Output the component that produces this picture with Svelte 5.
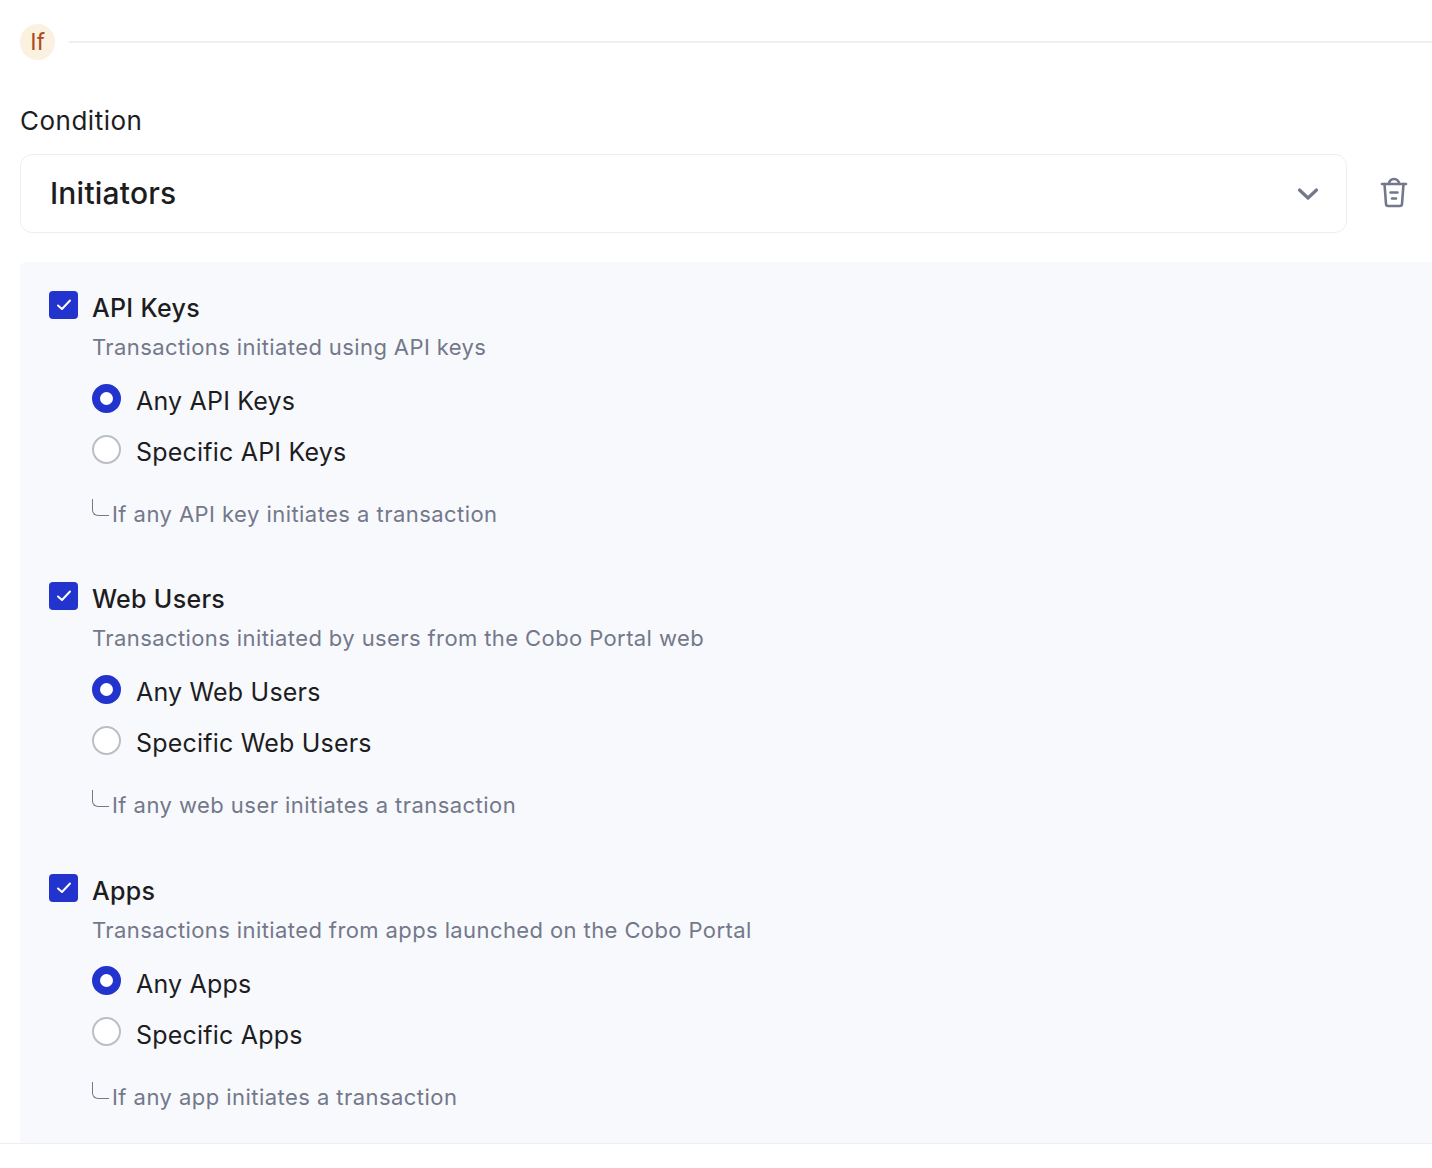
<script lang="ts">
    const groups = [
        {
            title: 'API Keys',
            desc: 'Transactions initiated using API keys',
            any: 'Any API Keys',
            specific: 'Specific API Keys',
            note: 'If any API key initiates a transaction'
        },
        {
            title: 'Web Users',
            desc: 'Transactions initiated by users from the Cobo Portal web',
            any: 'Any Web Users',
            specific: 'Specific Web Users',
            note: 'If any web user initiates a transaction'
        },
        {
            title: 'Apps',
            desc: 'Transactions initiated from apps launched on the Cobo Portal',
            any: 'Any Apps',
            specific: 'Specific Apps',
            note: 'If any app initiates a transaction'
        }
    ];
</script>

<div class="page">
    <div class="step">
        <span class="badge">If</span>
        <span class="rule"></span>
    </div>

    <div class="label">Condition</div>
    <div class="row">
        <div class="select">
            <span class="value">Initiators</span>
            <svg width="22" height="14" viewBox="0 0 22 14" fill="none">
                <path d="M2.5 3 11 11l8.500-8" stroke="#73788a" stroke-width="3.200" stroke-linecap="round" stroke-linejoin="round" />
            </svg>
        </div>
        <svg class="trash" width="28" height="32" viewBox="0 0 28 32" fill="none" stroke="#73788a" stroke-width="2.600" stroke-linecap="round" stroke-linejoin="round">
            <path d="M2 7h24" />
            <path d="M9 7c0-3 2-5 5-5s5 2 5 5" />
            <path d="M4.500 7l1.500 20c.1 1.300 1 2 2.200 2h11.600c1.200 0 2.100-.7 2.200-2l1.500-20" />
            <path d="M10.500 15.500h7M12 21.500h4" />
        </svg>
    </div>

    <div class="panel">
        {#each groups as g}
            <section class="group">
                <div class="head">
                    <span class="check">
                        <svg width="16" height="14" viewBox="0 0 16 14" fill="none">
                            <path d="M2 7.500 6 11l8-8.500" stroke="#fff" stroke-width="2" stroke-linecap="round" stroke-linejoin="round" />
                        </svg>
                    </span>
                    <span class="title">{g.title}</span>
                </div>
                <div class="body">
                    <p class="desc">{g.desc}</p>
                    <div class="option">
                        <span class="radio on"></span>
                        <span>{g.any}</span>
                    </div>
                    <div class="option">
                        <span class="radio"></span>
                        <span>{g.specific}</span>
                    </div>
                    <div class="note">
                        <span class="elbow"></span>
                        <span>{g.note}</span>
                    </div>
                </div>
            </section>
        {/each}
    </div>
    <div class="foot"></div>
</div>

<style>
    :global(body) {
        margin: 0;
        background: #fff;
    }

    .page {
        height: 1168px;
        overflow: hidden;
        padding-top: 24px;
        box-sizing: border-box;
        font-family: "Inter", "Open Sans", sans-serif;
        color: #1d1d1f;
    }

    .step {
        display: flex;
        align-items: center;
        gap: 14px;
        padding-left: 20px;
    }

    .badge {
        width: 35px;
        height: 36px;
        border-radius: 50%;
        background: #faf1e1;
        color: #b0491c;
        font-family: "Roboto", sans-serif;
        font-size: 23px;
        display: flex;
        align-items: center;
        justify-content: center;
    }

    .rule {
        flex: 1;
        height: 2px;
        background: #eeeef3;
    }

    .label {
        margin: 46px 0 0 20px;
        font-size: 26px;
        line-height: 30px;
        letter-spacing: 0.5px;
    }

    .row {
        display: flex;
        align-items: center;
        margin: 18px 0 0 20px;
    }

    .select {
        width: 1327px;
        height: 79px;
        box-sizing: border-box;
        border: 1px solid #eceef2;
        border-radius: 12px;
        background: #fff;
        padding: 0 27px 0 29px;
        display: flex;
        align-items: center;
        justify-content: space-between;
        font-size: 30px;
        font-weight: 500;
        letter-spacing: 0.2px;
    }

    .value {
        margin-top: -2px;
    }

    .trash {
        margin: 0 0 2px 33px;
    }

    .panel {
        margin: 29px 0 0 20px;
        height: 881px;
        box-sizing: border-box;
        background: #f8f9fd;
        border-top-left-radius: 6px;
        padding: 29px 0 0 29px;
    }

    .group {
        height: 291.25px;
    }

    .head {
        display: flex;
        align-items: center;
        gap: 15px;
        height: 34px;
    }

    .check {
        width: 29px;
        height: 28px;
        margin-top: -6px;
        border-radius: 4px;
        background: #2234cd;
        display: flex;
        align-items: center;
        justify-content: center;
    }

    .title {
        font-size: 25px;
        font-weight: 500;
        letter-spacing: 0.3px;
        margin-left: -1px;
    }

    .body {
        padding-left: 43px;
    }

    .desc {
        margin: 7px 0 21px;
        font-size: 22px;
        line-height: 30px;
        letter-spacing: 0.4px;
        color: #73788a;
    }

    .option {
        display: flex;
        align-items: center;
        gap: 15px;
        height: 36px;
        font-size: 25px;
        letter-spacing: 0.2px;
    }

    .option + .option {
        margin-top: 15px;
    }

    .radio {
        width: 29px;
        height: 29px;
        margin-top: -6px;
        box-sizing: border-box;
        border-radius: 50%;
        border: 2px solid #bcbec6;
        background: #fff;
    }

    .radio.on {
        border: 8px solid #2234cd;
    }

    .note {
        display: flex;
        align-items: center;
        gap: 3px;
        height: 30px;
        margin-top: 29px;
        font-size: 22px;
        letter-spacing: 0.45px;
        color: #73788a;
    }

    .elbow {
        width: 16px;
        height: 16px;
        margin-top: -13px;
        border-left: 1px solid #73788a;
        border-bottom: 1px solid #73788a;
        border-bottom-left-radius: 6px;
    }

    .foot {
        border-top: 1px solid #eeeef1;
        background: #fff;
        height: 24px;
    }
</style>
